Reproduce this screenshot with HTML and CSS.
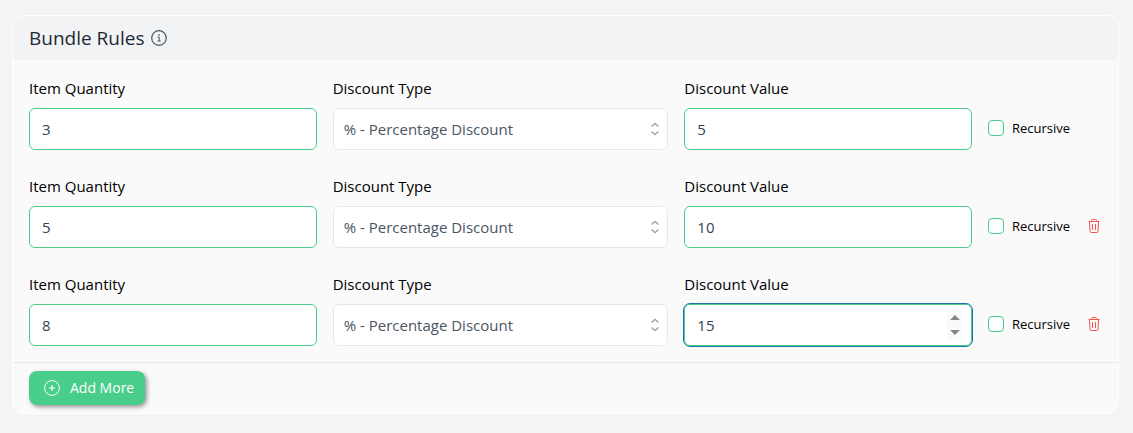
FILE: index.html
```html
<!DOCTYPE html>
<html lang="en">
<head>
    <meta charset="UTF-8">
    <meta name="viewport" content="width=device-width, initial-scale=1.0">
    <title>Bundle Rules</title>
    <link rel="stylesheet" href="styles.css">
</head>
<body>
    <svg class="sprite" width="0" height="0">
        <symbol id="icon-updown" viewBox="0 0 10 14">
            <path d="M1.500 4.500 5 1.500l3.500 3M1.500 9.500l3.500 3 3.500-3" fill="none" stroke="#9ca3af" stroke-width="1.400"/>
        </symbol>
        <symbol id="icon-trash" viewBox="0 0 12 14">
            <path d="M.5 2.500h11M3.500 2.500V1.500a1 1 0 0 1 1-1h3a1 1 0 0 1 1 1v1M1.500 2.500l.500 9.800a1.200 1.200 0 0 0 1.200 1.200h5.600a1.200 1.200 0 0 0 1.200-1.200l.500-9.800M4.500 5v6M7.500 5v6" fill="none" stroke="#ef5350"/>
        </symbol>
    </svg>
    <form class="card">
        <div class="card-header">
            <h2>Bundle Rules</h2>
            <svg width="16" height="16" viewBox="0 0 16 16" fill="none" stroke="#4b5563">
                <circle cx="8" cy="8" r="7.300" stroke-width="1.200"/>
                <path d="M6.500 7.100H8.200V11M6.500 11H9.700"/>
                <circle cx="8" cy="4.900" r=".8" fill="#4b5563" stroke="none"/>
            </svg>
        </div>
        <div class="rules">
            <div class="rule">
                <div class="field">
                    <label for="qty1">Item Quantity</label>
                    <input class="input" type="number" id="qty1" value="3">
                </div>
                <div class="field">
                    <label for="type1">Discount Type</label>
                    <div class="control">
                        <select class="input select" id="type1">
                            <option>% - Percentage Discount</option>
                        </select>
                        <svg class="updown" width="10" height="14"><use href="#icon-updown"/></svg>
                    </div>
                </div>
                <div class="field">
                    <label for="value1">Discount Value</label>
                    <input class="input" type="number" id="value1" value="5">
                </div>
                <div class="options">
                    <input class="checkbox" type="checkbox" id="recursive1">
                    <label for="recursive1">Recursive</label>
                </div>
            </div>
            <div class="rule">
                <div class="field">
                    <label for="qty2">Item Quantity</label>
                    <input class="input" type="number" id="qty2" value="5">
                </div>
                <div class="field">
                    <label for="type2">Discount Type</label>
                    <div class="control">
                        <select class="input select" id="type2">
                            <option>% - Percentage Discount</option>
                        </select>
                        <svg class="updown" width="10" height="14"><use href="#icon-updown"/></svg>
                    </div>
                </div>
                <div class="field">
                    <label for="value2">Discount Value</label>
                    <input class="input" type="number" id="value2" value="10">
                </div>
                <div class="options">
                    <input class="checkbox" type="checkbox" id="recursive2">
                    <label for="recursive2">Recursive</label>
                    <button class="delete" type="button" aria-label="Delete rule">
                        <svg width="12" height="14"><use href="#icon-trash"/></svg>
                    </button>
                </div>
            </div>
            <div class="rule">
                <div class="field">
                    <label for="qty3">Item Quantity</label>
                    <input class="input" type="number" id="qty3" value="8">
                </div>
                <div class="field">
                    <label for="type3">Discount Type</label>
                    <div class="control">
                        <select class="input select" id="type3">
                            <option>% - Percentage Discount</option>
                        </select>
                        <svg class="updown" width="10" height="14"><use href="#icon-updown"/></svg>
                    </div>
                </div>
                <div class="field">
                    <label for="value3">Discount Value</label>
                    <div class="control">
                        <input class="input focused" type="number" id="value3" value="15">
                        <div class="spinner">
                            <button type="button" aria-label="Increase">
                                <svg width="10" height="5"><path d="M0 5 5 0l5 5z" fill="#858585"/></svg>
                            </button>
                            <button type="button" aria-label="Decrease">
                                <svg width="10" height="5"><path d="M0 0h10L5 5z" fill="#858585"/></svg>
                            </button>
                        </div>
                    </div>
                </div>
                <div class="options">
                    <input class="checkbox" type="checkbox" id="recursive3">
                    <label for="recursive3">Recursive</label>
                    <button class="delete" type="button" aria-label="Delete rule">
                        <svg width="12" height="14"><use href="#icon-trash"/></svg>
                    </button>
                </div>
            </div>
        </div>
        <div class="card-footer">
            <button class="add" type="button">
                <svg width="16" height="16" viewBox="0 0 16 16" fill="none" stroke="#fff">
                    <circle cx="8" cy="8" r="7.400"/>
                    <path d="M8 5v6M5 8h6" stroke-width="1.200"/>
                </svg>
                Add More
            </button>
        </div>
    </form>
    <script>
        const spin = document.querySelectorAll(".spinner button");
        const value = document.getElementById("value3");
        spin[0].onclick = () => value.stepUp();
        spin[1].onclick = () => value.stepDown();
    </script>
</body>
</html>
```
FILE: styles.css
```css
* {
    box-sizing: border-box;
}
body {
    margin: 0;
    padding: 15px 14px 18px 12px;
    background-color: #f2f4f6;
    font-family: "Segoe UI", "Open Sans", "Noto Sans", sans-serif;
    font-size: 15px;
    line-height: 24px;
    color: #000;
}
button, input, select {
    font: inherit;
}
button {
    padding: 0;
    border: none;
    background: none;
    cursor: pointer;
}
svg {
    display: block;
}
.sprite {
    position: absolute;
}
.card {
    border: 1px solid #fff;
    border-radius: 12px;
    background-color: #fafafa;
    overflow: hidden;
}
.card-header {
    display: flex;
    align-items: center;
    gap: 6px;
    padding: 8px 16px;
    background-color: #f2f3f5;
}
.card-header h2 {
    margin: 0;
    font-size: 19px;
    font-weight: 400;
    line-height: 28px;
    color: #1f2937;
}
.rules {
    display: flex;
    flex-direction: column;
    gap: 24px;
    padding: 16px;
    border-bottom: 1px solid #e5e7eb;
}
.rule {
    display: grid;
    grid-template-columns: 6fr 7fr 6fr 114px;
    gap: 16px;
    align-items: end;
}
.field {
    display: flex;
    flex-direction: column;
    gap: 8px;
}
.control {
    position: relative;
}
.input {
    display: block;
    width: 100%;
    height: 42px;
    padding: 0 12px;
    border: 1px solid #48ce8a;
    border-radius: 6px;
    background-color: #fff;
    color: #374151;
    appearance: none;
}
input[type="number"] {
    appearance: textfield;
}
.select {
    padding: 0 10px;
    border-color: #e5e7eb;
    color: #4b5563;
}
.focused {
    outline: 1px solid #1f72b0;
}
.updown {
    position: absolute;
    right: 8px;
    top: 14px;
    pointer-events: none;
}
.spinner {
    position: absolute;
    right: 10px;
    top: 6px;
    display: flex;
    flex-direction: column;
    width: 15px;
    background-color: #fafafa;
}
.spinner button {
    display: flex;
    align-items: center;
    justify-content: center;
    height: 15px;
}
.options {
    display: flex;
    align-items: center;
    height: 44px;
    font-size: 13px;
}
.checkbox {
    width: 16px;
    height: 16px;
    margin: 0 8px 0 0;
    border: 1px solid #48ce8a;
    border-radius: 4px;
    background-color: #fff;
    appearance: none;
}
.checkbox:checked {
    background-color: #48ce8a;
}
.delete {
    margin-left: auto;
    padding: 2px;
}
.card-footer {
    padding: 8px 16px;
}
.add {
    display: flex;
    align-items: center;
    gap: 10px;
    height: 34px;
    padding: 0 11px 0 15px;
    border-radius: 8px;
    background-color: #48ce8a;
    box-shadow: 2px 2px 4px rgba(0, 0, 0, 0.4);
    color: #fff;
    font-size: 14px;
}
```
